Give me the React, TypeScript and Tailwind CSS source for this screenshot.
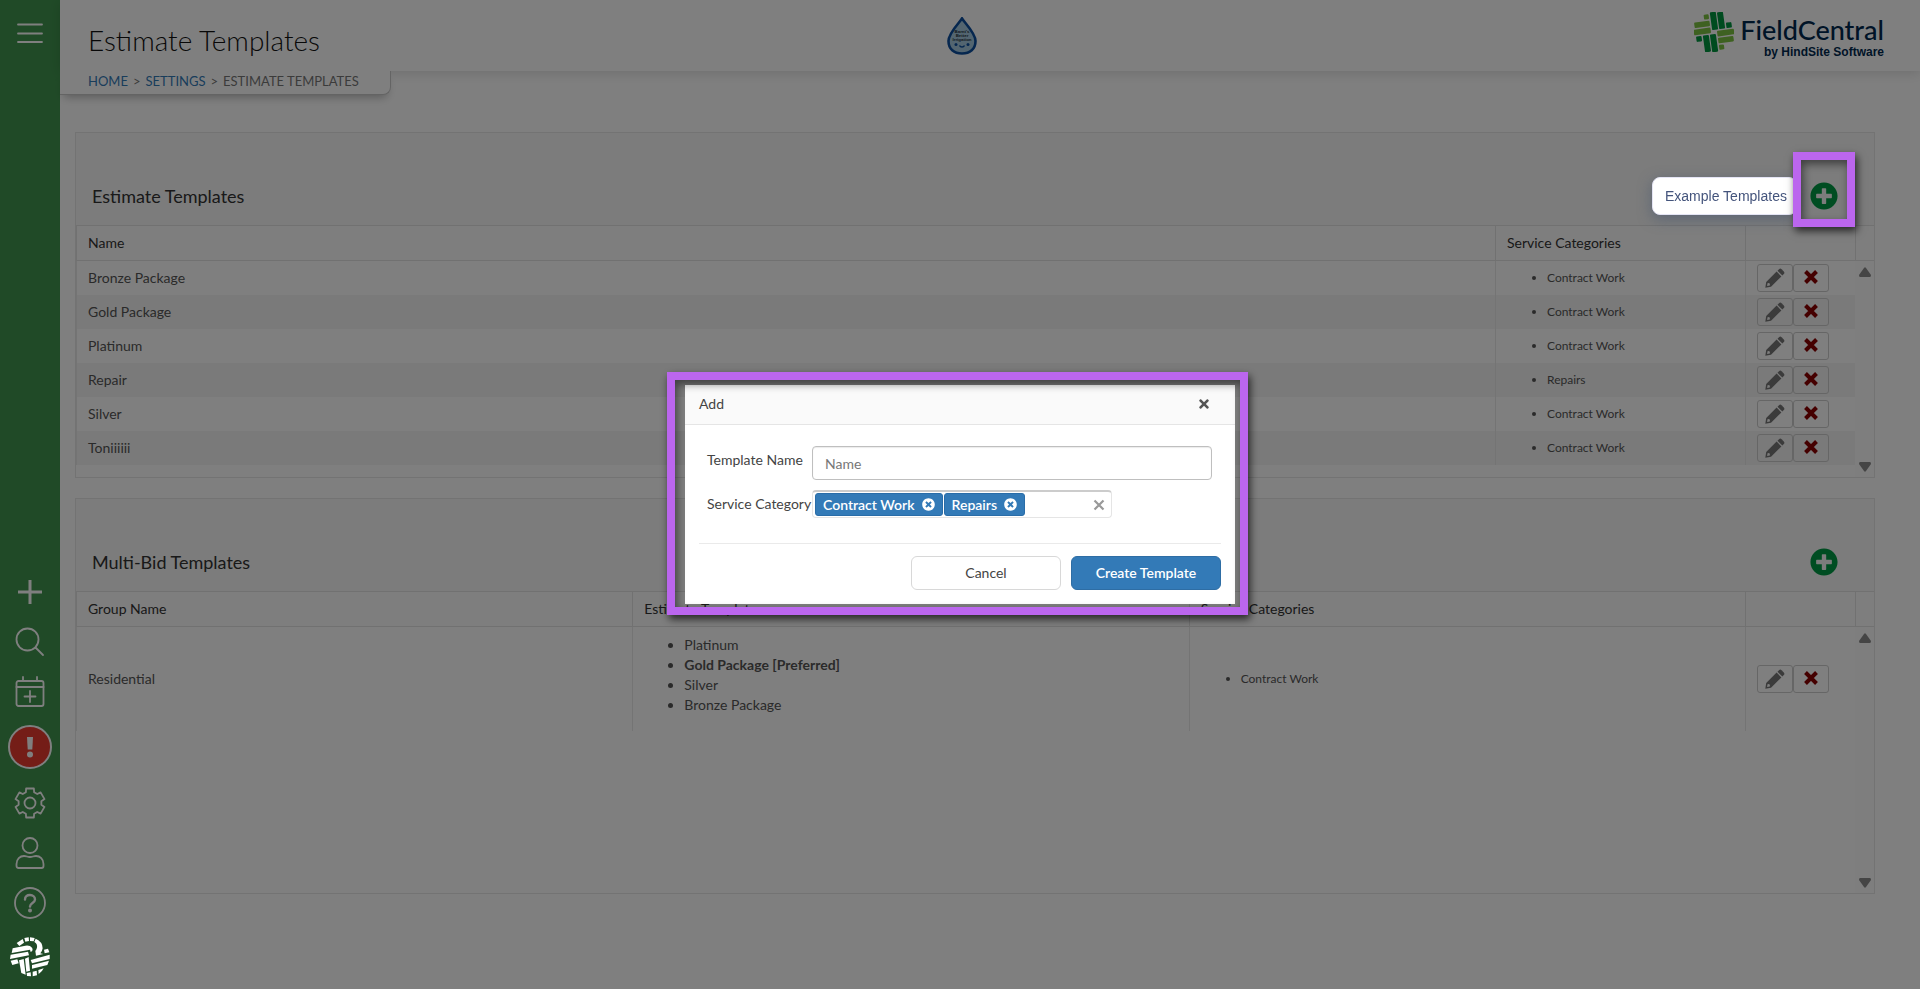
import React from "react";
import { FaPlusCircle, FaTimes, FaTimesCircle } from "react-icons/fa";

const estimateTemplates = [
  { name: "Bronze Package", category: "Contract Work" },
  { name: "Gold Package", category: "Contract Work" },
  { name: "Platinum", category: "Contract Work" },
  { name: "Repair", category: "Repairs" },
  { name: "Silver", category: "Contract Work" },
  { name: "Toniiiiii", category: "Contract Work" },
];

const bidTemplates = [
  { name: "Platinum", preferred: false },
  { name: "Gold Package [Preferred]", preferred: true },
  { name: "Silver", preferred: false },
  { name: "Bronze Package", preferred: false },
];

const selectedCategories = ["Contract Work", "Repairs"];

// outline of the six-toothed gear, centred on 16,16
const gearPath = () => {
  const points: string[] = [];
  for (let i = 0; i < 6; i++) {
    const mid = -90 + i * 60;
    [
      [11.5, -21],
      [15, -15],
      [15, 15],
      [11.5, 21],
    ].forEach(([r, a]) => {
      const t = ((mid + a) * Math.PI) / 180;
      points.push(`${(16 + r * Math.cos(t)).toFixed(2)} ${(16 + r * Math.sin(t)).toFixed(2)}`);
    });
  }
  return `M${points.join("L")}Z`;
};

const SideIcon = ({ label, children }: { label: string; children: React.ReactNode }) => (
  <button aria-label={label} className="flex h-8 w-8 cursor-pointer items-center justify-center">
    <svg
      viewBox="0 0 32 32"
      className="h-8 w-8"
      fill="none"
      stroke="white"
      strokeWidth="1.8"
      strokeLinecap="round"
      strokeLinejoin="round"
    >
      {children}
    </svg>
  </button>
);

const WeaveMark = () => (
  <svg viewBox="0 0 40 40" className="h-10 w-10">
    <g transform="rotate(-8 20 20)">
      <g fill="#00963f">
        <rect x="18.5" y="0" width="6" height="18" rx="1" />
        <rect x="25.6" y="1" width="6" height="17" rx="1" />
        <rect x="8.4" y="22" width="6" height="17" rx="1" />
        <rect x="15.5" y="22" width="6" height="18" rx="1" />
        <rect x="33" y="12.5" width="5.5" height="5.5" rx="1" />
        <rect x="1.5" y="22" width="5.5" height="5.5" rx="1" />
      </g>
      <g fill="#7cc242">
        <rect x="1.5" y="8" width="15.5" height="5.6" rx="1" />
        <rect x="0" y="15" width="17" height="5.6" rx="1" />
        <rect x="23" y="19.4" width="17" height="5.6" rx="1" />
        <rect x="23" y="26.4" width="15.5" height="5.6" rx="1" />
        <rect x="12" y="1.5" width="5" height="5" rx="1" />
        <rect x="23" y="33.5" width="5" height="5" rx="1" />
      </g>
    </g>
  </svg>
);

// rounder one-colour version of the mark
const KnotMark = () => (
  <svg viewBox="0 0 120 120" className="relative z-20 h-10 w-10" fill="white">
    <path d="M43 3L56 1L57 12L46 14Z" />
    <path d="M60 1L74 3L71 13L60 12Z" />
    <path d="M20 18L38 6L42 17L28 27Z" />
    <path d="M77 5Q98 14 98 34Q97 42 91 49L100 51L78 56L76 42Q84 32 80 22Q78 17 73 15Z" />
    <path d="M8 34L46 26Q60 24 66 32Q71 40 62 45L60 38L5 48Z" />
    <path d="M2 53L54 44L57 55L0 66Z" />
    <path d="M2 71L22 67L26 79L7 84Z" />
    <path d="M102 38L114 35L118 46L104 49Z" />
    <path d="M62 69L119 53L119 66L66 79Z" />
    <path d="M66 84L117 71L112 84L66 95Z" />
    <path d="M27 70L41 66L47 113L34 108Z" />
    <path d="M45 65L56 60L60 101L49 104Z" />
    <path d="M50 108L62 106L63 118L51 117Z" />
    <path d="M68 104L80 101L81 115L68 118Z" />
    <path d="M85 99L101 94Q97 104 86 111Z" />
  </svg>
);

const Sidebar = () => (
  <nav className="flex w-[60px] shrink-0 flex-col items-center bg-[#41954f] pt-[17px] pb-3">
    <SideIcon label="Menu">
      <path d="M4 7.5H28M4 16.5H28M4 25H28" />
    </SideIcon>
    <div className="mt-auto flex flex-col items-center gap-[18px]">
      <SideIcon label="Add">
        <path d="M16 5V29M4 17H28" strokeWidth="3" strokeLinecap="butt" />
      </SideIcon>
      <SideIcon label="Search">
        <circle cx="13.5" cy="14.5" r="11" />
        <path d="M21.5 22.5L29 30" />
      </SideIcon>
      <SideIcon label="Schedule">
        <rect x="2.5" y="6" width="27" height="25" rx="2" />
        <path d="M2.5 12H29.5M9 2V6M23 2V6M16 16V27M10.5 21.5H21.5" />
      </SideIcon>
      <button
        aria-label="Alerts"
        className="flex h-11 w-11 cursor-pointer items-center justify-center rounded-full border-2 border-white bg-[#e83a2e]"
      >
        <svg viewBox="0 0 10 22" className="h-[22px] w-[10px]" fill="white">
          <path d="M2 1H8L7.3 13.5H2.7Z" />
          <circle cx="5" cy="18.5" r="3" />
        </svg>
      </button>
      <SideIcon label="Settings">
        <path d={gearPath()} />
        <circle cx="16" cy="16" r="5.5" />
      </SideIcon>
      <SideIcon label="Account">
        <circle cx="16" cy="8.5" r="7.5" />
        <path d="M2.5 29V27C2.5 22 6 19 10 19C12.5 19 13.5 20 16 20C18.5 20 19.5 19 22 19C26 19 29.5 22 29.5 27V29C29.5 30.5 28.5 31 27.5 31H4.5C3.5 31 2.5 30.5 2.5 29Z" />
      </SideIcon>
      <SideIcon label="Help">
        <circle cx="16" cy="16" r="15" />
        <path d="M11 12.5C11 9.5 13 8 16 8C19 8 21 10 21 12.5C21 16 16 16 16 19.5" strokeWidth="2.4" />
        <circle cx="16" cy="23.5" r="1" strokeWidth="2" />
      </SideIcon>
      <KnotMark />
    </div>
  </nav>
);

const DropLogo = () => (
  <svg viewBox="0 0 30 38" className="h-[38px] w-[30px]">
    <path
      d="M15 1.5C13 5 1.5 16 1.5 24C1.5 32 7 36.5 15 36.5C23 36.5 28.5 32 28.5 24C28.5 16 17 5 15 1.5Z"
      fill="#a6cbe0"
      stroke="#0d4f9f"
      strokeWidth="2.6"
    />
    <g fontFamily="Liberation Sans, sans-serif" fontWeight="700" fontSize="4.4" fill="#26333d" textAnchor="middle">
      <text x="15" y="16">Barnt's</text>
      <text x="15" y="20">Better</text>
      <text x="15" y="24">Irrigation</text>
    </g>
    <g fill="#0d4f9f">
      <circle cx="9" cy="27.5" r="1.5" />
      <circle cx="21" cy="27.5" r="1.5" />
    </g>
    <path d="M12.5 28.5C13.5 30.5 16.5 30.5 17.5 28.5" stroke="#0d4f9f" strokeWidth="1.5" fill="none" />
  </svg>
);

const Header = () => (
  <header className="relative grid h-[71px] grid-cols-3 items-center bg-white pr-9 pl-7 shadow-[0_2px_12px_rgba(0,0,0,0.14)]">
    <h1 className="mt-2 text-[28px] leading-8 font-light text-[#111111]">Estimate Templates</h1>
    <div className="flex justify-center pr-12">
      <DropLogo />
    </div>
    <div className="flex justify-end gap-1.5">
      <WeaveMark />
      <div className="flex flex-col items-end pt-1 text-[#00294f]">
        <span className="text-[27px] leading-7 font-medium">FieldCentral</span>
        <span className="font-['Liberation_Sans',sans-serif] text-xs leading-4 font-bold">
          by HindSite Software
        </span>
      </div>
    </div>
  </header>
);

const Breadcrumb = () => (
  <div className="relative flex h-6 w-[331px] items-center gap-[5px] rounded-br-lg border-r border-b border-[#c8c8c8] bg-white pb-0.5 pl-7 text-[13px] text-[#777777] shadow-[0_6px_10px_-4px_rgba(0,0,0,0.3)]">
    <a href="#home" className="text-[#337ab7]">HOME</a>
    <span>&gt;</span>
    <a href="#settings" className="text-[#337ab7]">SETTINGS</a>
    <span>&gt;</span>
    <span>ESTIMATE TEMPLATES</span>
  </div>
);

const highlight =
  "pointer-events-none absolute z-20 border-8 border-[#bb66ee] shadow-[2px_4px_8px_rgba(0,0,0,0.7),inset_2px_4px_8px_rgba(0,0,0,0.5)]";

const AddButton = ({ label }: { label: string }) => (
  <button aria-label={label} className="cursor-pointer text-[#009a44]">
    <FaPlusCircle className="h-7 w-7" />
  </button>
);

const PanelHeader = ({ title, children }: { title: string; children: React.ReactNode }) => (
  <div className="flex h-[92px] items-center justify-between bg-[#f8f8f8] pt-[34px] pr-9 pl-4">
    <h2 className="text-lg text-[#333333]">{title}</h2>
    <div className="flex items-center">{children}</div>
  </div>
);

const RowActions = ({ name }: { name: string }) => (
  <div className="flex">
    <button
      aria-label={`Edit ${name}`}
      className="flex h-7 w-9 cursor-pointer items-center justify-center rounded-[3px] border border-[#cccccc] text-[#777777]"
    >
      <svg viewBox="0 0 20 20" className="h-5 w-5" fill="currentColor">
        <path d="M14 1.2Q15.3 0 16.6 1.2L18.8 3.4Q20 4.700 18.800 6L17.300 7.500L12.500 2.700Z" />
        <path
          fillRule="evenodd"
          d="M11.600 3.600L16.400 8.400L6 18.800L0.300 19.700L1.200 14ZM2.500 15.200L2.100 17.900L4.800 17.500L4.900 15.900L4.100 15.100Z"
        />
      </svg>
    </button>
    <button
      aria-label={`Delete ${name}`}
      className="flex h-7 w-9 cursor-pointer items-center justify-center rounded-[3px] border border-[#cccccc] text-[#8b0000]"
    >
      <svg viewBox="0 0 16 16" className="mb-0.5 h-4 w-4" stroke="currentColor" strokeWidth="4">
        <path d="M2.500 2.500L13.500 13.500M13.500 2.500L2.500 13.500" />
      </svg>
    </button>
  </div>
);

const ScrollTrack = () => (
  <div className="flex w-[19px] shrink-0 flex-col">
    <div className="h-[35px] border-b border-l border-[#e2e2e2] bg-[#fcfcfc]" />
    <div className="flex flex-1 flex-col items-center justify-between bg-[#fcfcfc] pt-1.5 pb-[5px]">
      <svg viewBox="0 0 12 10" className="h-2.5 w-3" fill="#8b8b8b">
        <path d="M5 1Q6 -0.5 7 1L12 8Q12 10 11 10H1Q0 10 0 8Z" />
      </svg>
      <svg viewBox="0 0 12 10" className="h-2.5 w-3" fill="#8b8b8b">
        <path d="M5 9Q6 10.5 7 9L12 2Q12 0 11 0H1Q0 0 0 2Z" />
      </svg>
    </div>
  </div>
);

const th = "h-[35px] border-b border-l border-[#e2e2e2] bg-[#fcfcfc] px-[11px] text-left font-normal text-[#333333]";
const td = "border-l border-[#e8e8e8] px-[11px]";

const EstimatePanel = () => (
  <section className="border border-[#e6e6e6]">
    <PanelHeader title="Estimate Templates">
      <button className="relative z-20 mr-[13px] h-[38px] w-[145px] cursor-pointer rounded-lg border border-[#e4e4f4] bg-white pl-3 text-left font-['Liberation_Sans',sans-serif] text-sm text-[#44547c] shadow-[0_4px_14px_rgba(60,80,110,0.5)]">
        Example Templates
      </button>
      <div className="relative flex">
        <AddButton label="Add estimate template" />
        <div className={`${highlight} -top-[30px] -right-[17px] -bottom-[17px] -left-[17px]`} />
      </div>
    </PanelHeader>
    <div className="flex h-[252px] border-t border-[#e2e2e2]">
      <div className="flex-1">
        <table className="w-full table-fixed border-separate border-spacing-0 text-sm text-[#555555]">
          <thead>
            <tr>
              <th className={th}>Name</th>
              <th className={`${th} w-[250px]`}>Service Categories</th>
              <th className={`${th} w-[110px]`} aria-label="Actions" />
            </tr>
          </thead>
          <tbody>
            {estimateTemplates.map((row) => (
              <tr key={row.name} className="h-[34px] even:bg-[#f4f4f4]">
                <td className={td}>{row.name}</td>
                <td className={td}>
                  <ul className="list-disc pl-10 text-xs">
                    <li>{row.category}</li>
                  </ul>
                </td>
                <td className={td}>
                  <RowActions name={row.name} />
                </td>
              </tr>
            ))}
          </tbody>
        </table>
      </div>
      <ScrollTrack />
    </div>
  </section>
);

const MultiBidPanel = () => (
  <section className="mt-5 border border-[#e6e6e6]">
    <PanelHeader title="Multi-Bid Templates">
      <AddButton label="Add multi-bid template" />
    </PanelHeader>
    <div className="flex h-[302px] border-t border-[#e2e2e2]">
      <div className="flex-1">
        <table className="w-full table-fixed border-separate border-spacing-0 text-sm text-[#555555]">
          <thead>
            <tr>
              <th className={th}>Group Name</th>
              <th className={th}>Estimate Templates</th>
              <th className={th}>Service Categories</th>
              <th className={`${th} w-[110px]`} aria-label="Actions" />
            </tr>
          </thead>
          <tbody>
            <tr className="h-[104px]">
              <td className={td}>Residential</td>
              <td className={`${td} pb-2`}>
                <ul className="list-disc pl-10 leading-5">
                  {bidTemplates.map((item) => (
                    <li key={item.name} className={item.preferred ? "font-bold" : ""}>
                      {item.name}
                    </li>
                  ))}
                </ul>
              </td>
              <td className={td}>
                <ul className="list-disc pl-10 text-xs">
                  <li>Contract Work</li>
                </ul>
              </td>
              <td className={td}>
                <RowActions name="Residential" />
              </td>
            </tr>
          </tbody>
        </table>
      </div>
      <ScrollTrack />
    </div>
  </section>
);

const AddDialog = () => (
  <div className="fixed inset-0 z-10 flex items-center justify-center bg-black/50 text-sm text-[#444444]">
    <div role="dialog" aria-label="Add" className="relative w-[550px] bg-white">
      <div className={`${highlight} -top-[13px] -right-[13px] -bottom-[11px] -left-[18px]`} />
      <div className="flex h-10 items-center justify-between border-b border-[#e5e5e5] bg-[#fafafa] pr-6 pb-0.5 pl-3.5">
        <span>Add</span>
        <button aria-label="Close" className="cursor-pointer text-[#555555]">
          <FaTimes className="h-3.5 w-3.5" />
        </button>
      </div>
      <div className="flex items-start pt-[21px] pr-[23px] pl-[22px]">
        <label htmlFor="template-name" className="w-[105px] shrink-0 pt-1">
          Template Name
        </label>
        <input
          id="template-name"
          placeholder="Name"
          className="h-[34px] min-w-0 flex-1 rounded border border-[#bfbfbf] px-3 shadow-[inset_0_1px_1px_rgba(0,0,0,0.08)] placeholder:text-[#777777]"
        />
      </div>
      <div className="mt-2.5 flex items-center pl-[22px]">
        <label htmlFor="service-category" className="w-[105px] shrink-0 whitespace-nowrap">
          Service Category
        </label>
        <div className="flex h-7 w-[300px] items-center gap-px rounded border border-t-2 border-[#e5e5e5] border-t-[#cccccc] pr-1.5 pl-0.5">
          {selectedCategories.map((category) => (
            <span
              key={category}
              className="flex h-[23px] shrink-0 items-center gap-[7px] rounded-[3px] border border-[#2a6da8] bg-[#337ab7] px-[7px] font-semibold text-white"
            >
              {category}
              <button aria-label={`Remove ${category}`} className="cursor-pointer">
                <FaTimesCircle className="h-[13px] w-[13px]" />
              </button>
            </span>
          ))}
          <input id="service-category" className="min-w-0 flex-1 outline-none" />
          <button aria-label="Clear categories" className="cursor-pointer text-[#999999]">
            <svg viewBox="0 0 12 12" className="h-3 w-3" stroke="currentColor" strokeWidth="2.2">
              <path d="M1.5 1.5L10.5 10.5M10.5 1.5L1.5 10.5" />
            </svg>
          </button>
        </div>
      </div>
      <div className="mx-3.5 mt-[25px] flex justify-end gap-2.5 border-t border-[#eaeaea] pt-3 pb-3.5">
        <button className="h-[34px] w-[150px] cursor-pointer rounded-md border border-[#d8d8d8] bg-white">Cancel</button>
        <button className="h-[34px] w-[150px] cursor-pointer rounded-md border border-[#2e6da4] bg-[#337ab7] font-semibold text-white">
          Create Template
        </button>
      </div>
    </div>
  </div>
);

export default function App() {
  return (
    <div className="flex min-h-screen bg-white font-['Lato',sans-serif]">
      <Sidebar />
      <div className="flex-1">
        <Header />
        <Breadcrumb />
        <main className="pt-[37px] pr-[45px] pl-[15px]">
          <EstimatePanel />
          <MultiBidPanel />
        </main>
      </div>
      <AddDialog />
    </div>
  );
}
